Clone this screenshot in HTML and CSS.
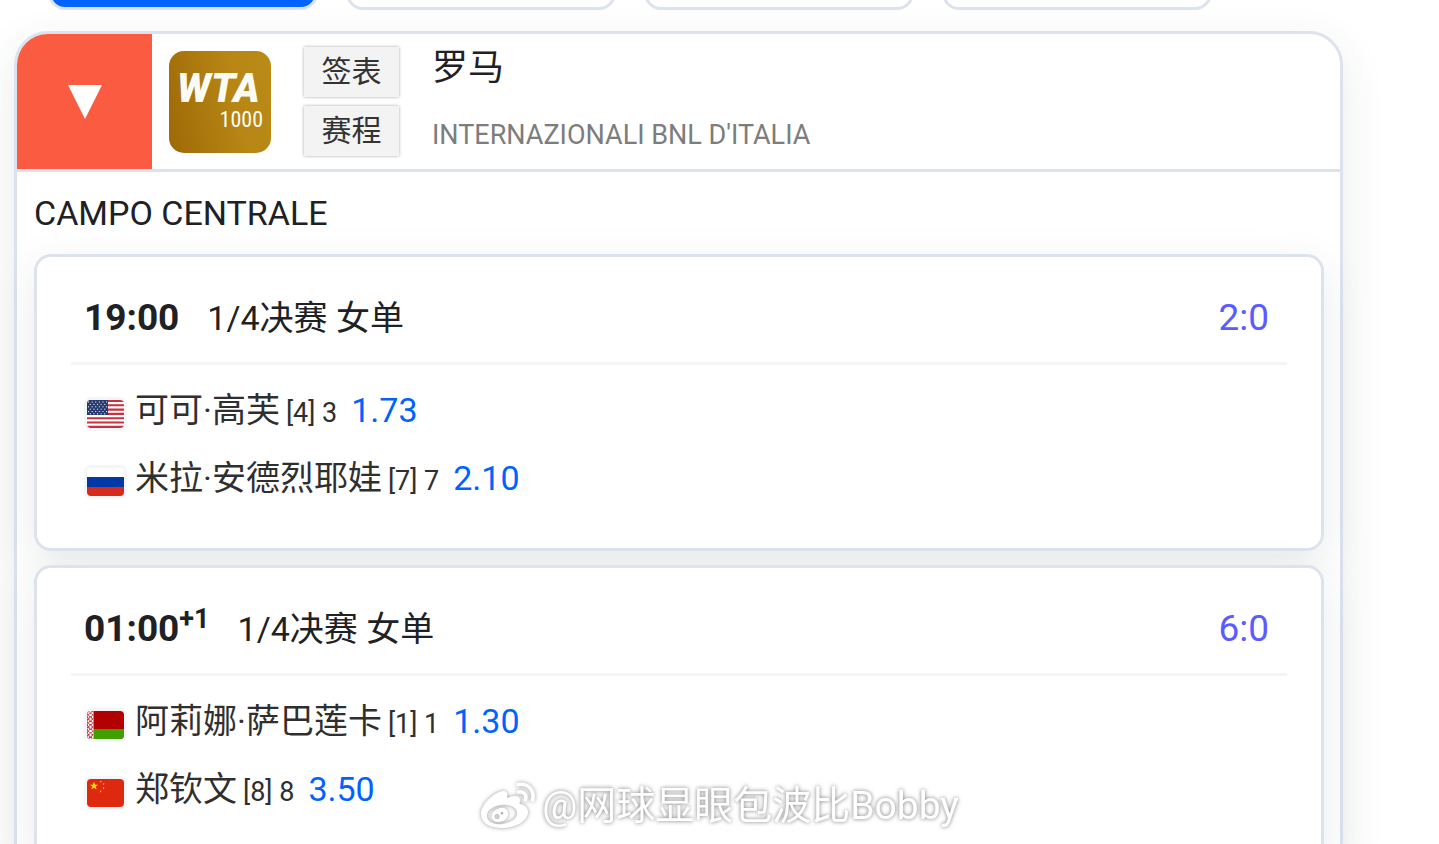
FILE: index.html
```html
<!DOCTYPE html>
<html lang="zh-CN">
<head>
	<meta charset="utf-8">
	<meta name="viewport" content="width=device-width, initial-scale=1">
	<title>罗马 - 赛程</title>
	<link rel="stylesheet" href="styles.css">
</head>
<body>
	<nav class="tabs">
		<button type="button" class="tab active" aria-label="1"></button>
		<button type="button" class="tab" aria-label="2"></button>
		<button type="button" class="tab" aria-label="3"></button>
		<button type="button" class="tab" aria-label="4"></button>
	</nav>

	<main class="tour">
		<header class="tour-header">
			<button type="button" class="toggle" aria-label="收起">
				<svg width="34" height="34" viewBox="0 0 34 34"><polygon points="0,0 34,0 17,34" fill="#fff"/></svg>
			</button>
			<svg class="logo" width="102" height="102" viewBox="0 0 102 102">
				<defs>
					<linearGradient id="gold" x1="0" y1="0.6" x2="1" y2="0.4">
						<stop offset="0" stop-color="#a06c08"/>
						<stop offset="0.65" stop-color="#b78614"/>
						<stop offset="1" stop-color="#b98a17"/>
					</linearGradient>
				</defs>
				<rect width="102" height="102" rx="15" fill="url(#gold)"/>
				<text class="logo-name" x="8" y="51">WTA</text>
				<text class="logo-level" x="94" y="76" text-anchor="end">1000</text>
			</svg>
			<div class="links">
				<button type="button" class="link">签表</button>
				<button type="button" class="link">赛程</button>
			</div>
			<div class="names">
				<h1 class="city">罗马</h1>
				<p class="full-name">INTERNAZIONALI BNL D'ITALIA</p>
			</div>
		</header>

		<h2 class="court">CAMPO CENTRALE</h2>

		<div class="matches">
			<section class="match">
				<div class="match-header">
					<strong class="time">19:00</strong>
					<span class="round">1/4决赛 女单</span>
					<span class="score">2:0</span>
				</div>
				<div class="player">
					<svg class="flag" width="37" height="28" viewBox="0 0 37 28">
						<rect width="37" height="28" fill="#fff"/>
						<path d="M0 1h37M0 5.3h37M0 9.6h37M0 13.9h37M0 18.2h37M0 22.5h37M0 26.9h37" stroke="#c8313e" stroke-width="2.1"/>
						<rect width="21" height="15" fill="#25386f"/>
						<path d="M1 2h20M2.800 4.400h18M1 6.800h20M2.800 9.200h18M1 11.600h20M2.800 13.800h18" stroke="#fff" stroke-width="1" stroke-dasharray="1.1 2.5"/>
					</svg>
					<span class="name">可可·高芙</span>
					<span class="seed">[4] 3</span>
					<a class="odds" href="#">1.73</a>
				</div>
				<div class="player">
					<svg class="flag" width="37" height="28" viewBox="0 0 37 28">
						<rect width="37" height="28" fill="#fff"/>
						<rect y="9" width="37" height="10" fill="#0039a6"/>
						<rect y="19" width="37" height="9" fill="#d52b1e"/>
					</svg>
					<span class="name">米拉·安德烈耶娃</span>
					<span class="seed">[7] 7</span>
					<a class="odds" href="#">2.10</a>
				</div>
			</section>

			<section class="match">
				<div class="match-header">
					<strong class="time">01:00<sup>+1</sup></strong>
					<span class="round">1/4决赛 女单</span>
					<span class="score">6:0</span>
				</div>
				<div class="player">
					<svg class="flag" width="37" height="28" viewBox="0 0 37 28">
						<rect width="37" height="28" fill="#b20000"/>
						<rect y="18" width="37" height="10" fill="#429f00"/>
						<rect width="6.5" height="28" fill="#fff"/>
						<path d="M1 0L6 4L1 8L6 12L1 16L6 20L1 24L6 28M6 0L1 4L6 8L1 12L6 16L1 20L6 24L1 28M.5 0V28" fill="none" stroke="#c8313e" stroke-width="1.1" stroke-dasharray="2 0.6"/>
					</svg>
					<span class="name">阿莉娜·萨巴莲卡</span>
					<span class="seed">[1] 1</span>
					<a class="odds" href="#">1.30</a>
				</div>
				<div class="player">
					<svg class="flag" width="37" height="28" viewBox="0 0 37 28">
						<rect width="37" height="28" fill="#de2910"/>
						<g fill="#ffde00">
							<path d="M7 2.8l1.1 2.9h3.1L8.7 7.6l1 3L7 8.8l-2.7 1.8 1-3L2.8 5.7h3.1z"/>
							<path d="M13 1.8l1.8.6-1.2 1.4zM15.8 4.4l1.8.2-1 1.5zM15.8 8.2l1.8.8-1.5 1.2zM13 11.3l1.6 1.1-1.5 1z"/>
						</g>
					</svg>
					<span class="name">郑钦文</span>
					<span class="seed">[8] 8</span>
					<a class="odds" href="#">3.50</a>
				</div>
			</section>
		</div>
	</main>

	<div class="watermark">
		<svg width="56" height="48" viewBox="0 0 56 48">
			<path fill="#fff" fill-rule="evenodd" d="M24 9C27 9 28 12 27 16C33 13 40 13 40 18C40 20 39 21 40 22C45 23 48 26 48 30C48 39 36 46 22 46C10 46 1 41 1 32C1 22 15 9 24 9ZM21 23C12 24 6 29 7 35C8 40 14 43 22 42C31 41 38 36 37 30C36 25 30 22 21 23Z"/>
			<path fill="#fff" fill-rule="evenodd" d="M20 26C25 25 28 28 28 32C28 37 23 40 18 40C14 40 11 37 12 33C13 29 16 27 20 26ZM17 32A2.6 2.6 0 1 0 17 37.2A2.6 2.6 0 1 0 17 32ZM22 30A1.3 1.3 0 1 0 22 32.6A1.3 1.3 0 1 0 22 30Z"/>
			<path fill="none" stroke="#fff" stroke-width="3.6" stroke-linecap="round" d="M38 2.5C49 1 55 9 52.500 18M38.500 10C44 9 47 13 45.500 18"/>
		</svg>
		<span>@网球显眼包波比Bobby</span>
	</div>
</body>
</html>
```
FILE: styles.css
```css
* {
	box-sizing: border-box;
}

body {
	margin: 0;
	background: #fff;
	color: #202124;
	font-family: Roboto, "Noto Sans CJK SC", sans-serif;
	font-size: 34px;
	overflow-x: hidden;
}

h1, h2, p {
	margin: 0;
	font-weight: 400;
}

button {
	margin: 0;
	padding: 0;
	font-family: inherit;
	color: inherit;
}

/* only the lower edge of the tab row is in view */
.tabs {
	display: flex;
	align-items: flex-end;
	gap: 28px;
	height: 10px;
	padding: 0 48px;
	overflow: hidden;
}

.tab {
	flex: 0 0 270px;
	height: 70px;
	border: 3px solid #dde3ec;
	border-radius: 17px;
	background: #fff;
}

	.tab.active {
		background: #0062ff;
	}

.tour {
	margin: 21px 96px 40px 14px;
	border: 3px solid #dde3ec;
	border-radius: 34px;
	background: #fff;
	box-shadow: 0 14px 44px rgba(30, 55, 45, .1);
}

.tour-header {
	display: flex;
	align-items: center;
	border-bottom: 3px solid #dde3ec;
}

.toggle {
	display: flex;
	align-items: center;
	justify-content: center;
	width: 135px;
	height: 135px;
	border: 0;
	border-radius: 31px 0 0 0;
	background: #fa5b41;
}

.logo {
	margin: 0 33px 0 17px;
}

.logo-name {
	font: italic 900 40px Roboto, sans-serif;
	fill: #fbfbf5;
}

.logo-level {
	font: 400 22px "Roboto Condensed", "Liberation Sans Narrow", Roboto, sans-serif;
	fill: #fbfbf5;
}

.links {
	display: flex;
	flex-direction: column;
	gap: 9px;
	margin-right: 33px;
}

.link {
	width: 95px;
	height: 50px;
	border: 0;
	background: #f3f3f3;
	box-shadow: 0 0 3px rgba(0, 0, 0, .35);
	color: #333;
	font-size: 30px;
	line-height: 50px;
}

.names {
	line-height: 67px;
}

.city {
	font-size: 36px;
}

.full-name {
	color: #7d7d7d;
	font-size: 27px;
}

.court {
	padding-left: 17px;
	font-size: 34px;
	line-height: 82px;
}

.matches {
	display: flex;
	flex-direction: column;
	gap: 14px;
	padding: 0 16px 16px 17px;
}

.match {
	padding: 34px;
	border: 3px solid #dde3ec;
	border-radius: 17px;
	background: #fff;
	box-shadow: 0 14px 44px rgba(30, 55, 45, .1);
}

.match-header {
	display: flex;
	align-items: baseline;
	margin-bottom: 13px;
	padding: 0 18px 17px 13px;
	border-bottom: 3px solid #f4f5f7;
	line-height: 54px;
}

.time {
	margin-right: 28px;
	font-size: 37px;
	font-weight: 700;
}

	.time sup {
		font-size: 27px;
		line-height: 0;
	}

.score {
	margin-left: auto;
	color: #5b5bff;
	font-size: 37px;
}

.player {
	display: flex;
	align-items: baseline;
	height: 68px;
	padding-left: 13px;
	color: #2f2f2f;
	line-height: 64px;
}

.flag {
	box-sizing: content-box;
	align-self: center;
	margin: 4px 8px 0 0;
	border: 3px solid #f5f6f8;
	border-radius: 7px;
}

.seed {
	margin: 0 14px 0 6px;
	font-size: 27px;
}

.odds {
	color: #0062ff;
	text-decoration: none;
}

.watermark {
	position: fixed;
	right: 0;
	bottom: 10px;
	left: 0;
	display: flex;
	align-items: center;
	justify-content: center;
	gap: 6px;
	color: #fff;
	font-size: 39px;
	line-height: 56px;
	text-shadow: 0 0 4px rgba(0, 0, 0, .55);
	pointer-events: none;
}

	.watermark svg {
		filter: drop-shadow(0 0 2px rgba(0, 0, 0, .4));
	}
```
